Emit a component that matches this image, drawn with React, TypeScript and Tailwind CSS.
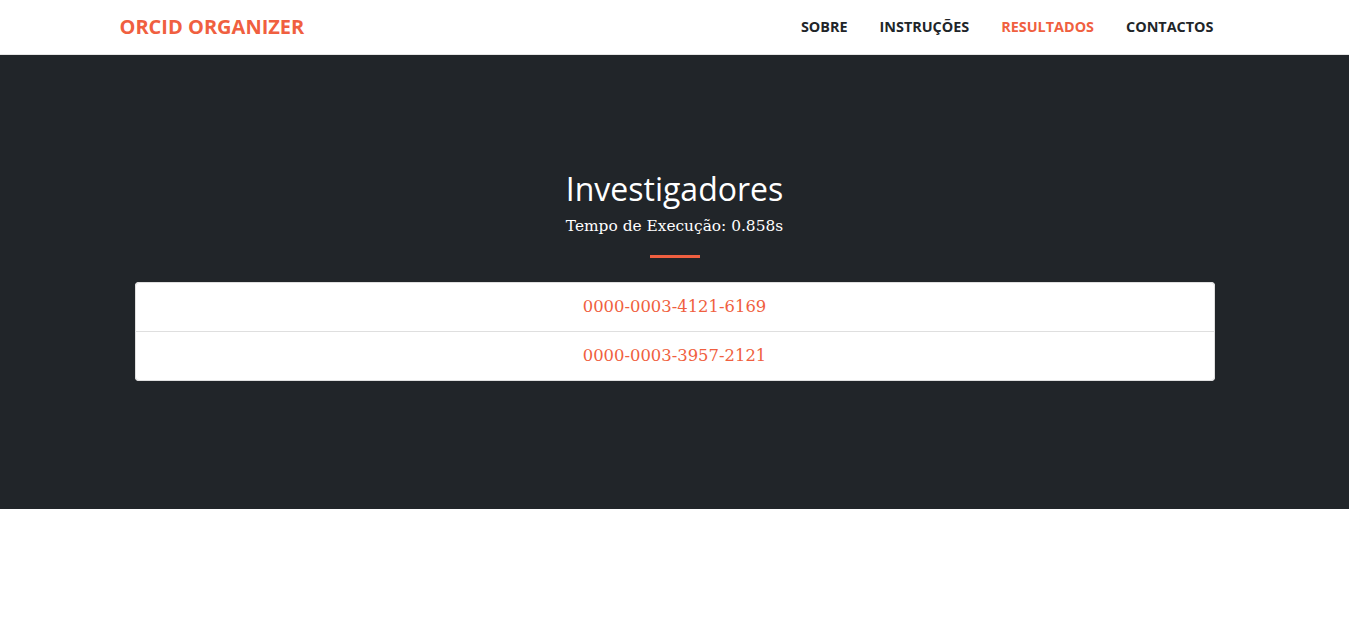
import React from "react";

const sans = { fontFamily: '"Open Sans", "Liberation Sans", sans-serif' };
const serif = { fontFamily: '"DejaVu Serif", "Liberation Serif", serif' };

export default function App() {
  return (
    <div className="min-h-[627px] bg-white" style={sans}>
      <nav className="h-[55px] border-b border-[#e5e5e5] bg-white">
        <div className="mx-auto flex h-full w-[1140px] items-center justify-between px-[15px] pb-px">
          <a className="text-[20px] font-bold uppercase text-[#f05f40]">ORCID Organizer</a>
          <ul className="flex items-center">
            {["Sobre", "Instruções", "Resultados", "Contactos"].map((t) => (
              <li key={t}>
                <a
                  className={
                    "block px-4 text-[14.4px] font-bold uppercase " +
                    (t === "Resultados" ? "text-[#f05f40]" : "text-[#212529]")
                  }
                >
                  {t}
                </a>
              </li>
            ))}
          </ul>
        </div>
      </nav>
      <section className="h-[454px] bg-[#212529] pt-[112px]">
        <div className="mx-auto w-[1110px] text-center">
          <h2 className="text-[32px] leading-[44px] font-normal text-white">Investigadores</h2>
          <p className="mt-[3px] text-[15.4px] leading-[24px] text-white" style={serif}>
            Tempo de Execução: 0.858s
          </p>
          <div className="mx-auto mt-[17px] h-[3px] w-[50px] bg-[#f05f40]" />
          <ul className="mx-auto mt-[24px] w-[1080px] rounded-[4px] bg-white">
            {["0000-0003-4121-6169", "0000-0003-3957-2121"].map((id, i) => (
              <li
                key={id}
                className={
                  "flex h-[50px] items-center justify-center border border-[#dfdfdf] text-[16.4px] text-[#f05f40] " +
                  (i > 0 ? "-mt-px rounded-b-[4px]" : "rounded-t-[4px]")
                }
                style={serif}
              >
                {id}
              </li>
            ))}
          </ul>
        </div>
      </section>
    </div>
  );
}
